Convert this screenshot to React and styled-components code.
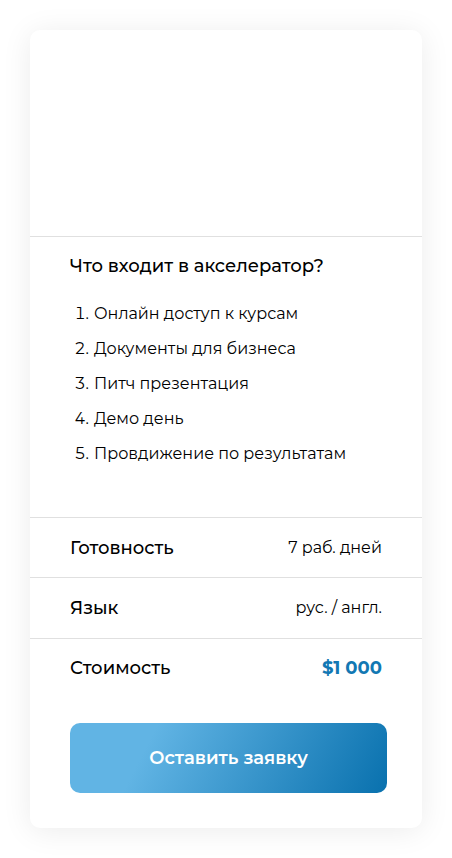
import React from 'react';
import styled, { createGlobalStyle } from 'styled-components';

const GlobalStyle = createGlobalStyle`
  * { box-sizing: border-box; }
  body {
    margin: 0;
    background: #fff;
    color: #000;
    font-family: Montserrat, Inter, "Open Sans", sans-serif;
    -webkit-font-smoothing: antialiased;
  }
`;

const Page = styled.main`
  padding: 30px;
`;

const Card = styled.article`
  background: #fff;
  border-radius: 10px;
  box-shadow: 0 3px 30px rgba(0, 0, 0, 0.08);
`;

const Cover = styled.div`
  height: 206px;
`;

const Included = styled.section`
  border-top: 1px solid #e0e0e0;
  padding: 17px 40px 46px;
`;

const Title = styled.h2`
  margin: 0;
  font-size: 18px;
  line-height: 24px;
  font-weight: 500;
`;

const List = styled.ol`
  margin: 18px 0 0;
  padding: 0;
  list-style: none;
  counter-reset: item;
  font-size: 16px;
  line-height: 35px;
`;

const Item = styled.li`
  display: flex;
  gap: 5px;
  counter-increment: item;

  &::before {
    content: counter(item) '.';
    width: 19px;
    text-align: right;
    font-variant-numeric: tabular-nums;
  }
`;

const Details = styled.dl`
  display: grid;
  grid-template-rows: repeat(3, 1fr);
  min-height: 181px;
  margin: 0;
`;

const Row = styled.div`
  display: flex;
  align-items: center;
  justify-content: space-between;
  padding: 0 40px;
  border-top: 1px solid #e0e0e0;
`;

const Label = styled.dt`
  font-size: 18px;
  line-height: 24px;
  font-weight: 500;
`;

const Value = styled.dd`
  margin: 0;
  font-size: ${(p) => (p.$price ? 18 : 16)}px;
  font-weight: ${(p) => (p.$price ? 700 : 400)};
  line-height: 24px;
  color: ${(p) => (p.$price ? '#1278b3' : '#000')};
`;

const Actions = styled.div`
  padding: 25px 35px 35px 40px;
`;

const Submit = styled.button`
  display: block;
  width: 100%;
  height: 70px;
  border: 0;
  border-radius: 10px;
  background: linear-gradient(117deg, #61b4e4 25%, #0971ae 100%);
  color: #fff;
  font: inherit;
  font-size: 18px;
  font-weight: 600;
  cursor: pointer;
`;

const items = [
  'Онлайн доступ к курсам',
  'Документы для бизнеса',
  'Питч презентация',
  'Демо день',
  'Провдижение по результатам',
];

const details = [
  { label: 'Готовность', value: '7 раб. дней' },
  { label: 'Язык', value: 'рус. / англ.' },
  { label: 'Стоимость', value: '$1 000', price: true },
];

export default function App() {
  return (
    <Page>
      <GlobalStyle />
      <Card>
        <Cover />
        <Included>
          <Title>Что входит в акселератор?</Title>
          <List>
            {items.map((item) => <Item key={item}>{item}</Item>)}
          </List>
        </Included>
        <Details>
          {details.map(({ label, value, price }) => (
            <Row key={label}>
              <Label>{label}</Label>
              <Value $price={price}>{value}</Value>
            </Row>
          ))}
        </Details>
        <Actions>
          <Submit type="button">Оставить заявку</Submit>
        </Actions>
      </Card>
    </Page>
  );
}
